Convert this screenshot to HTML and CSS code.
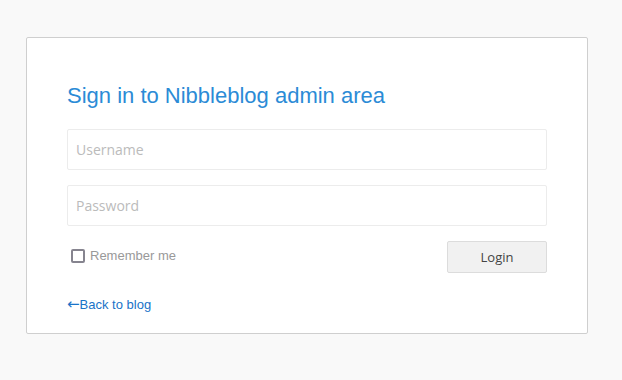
FILE: index.html
```html
<!DOCTYPE html>
<html lang="en">
<head>
    <meta charset="UTF-8">
    <title>Nibbleblog - Sign in</title>
    <link rel="stylesheet" href="styles.css">
</head>
<body>
    <div class="login-box">
        <h1 class="login-title">Sign in to Nibbleblog admin area</h1>
        <form class="login-form">
            <input type="text" class="login-input" placeholder="Username">
            <input type="password" class="login-input" placeholder="Password">
            <div class="login-row">
                <label class="remember">
                    <span class="checkbox"></span>
                    Remember me
                </label>
                <button type="button" class="login-button">Login</button>
            </div>
        </form>
        <a href="#" class="back-link"><span class="arrow">&larr;</span>Back to blog</a>
    </div>
</body>
</html>
```

FILE: styles.css
```css
* {
    margin: 0;
    padding: 0;
    box-sizing: border-box;
}

body {
    background-color: #f9f9f9;
    font-family: "Liberation Sans", Arial, sans-serif;
    padding: 37px 34px 0 26px;
}

.login-box {
    width: 562px;
    height: 297px;
    background-color: #fff;
    border: 1px solid #cfcfcf;
    border-radius: 2px;
    padding: 44px 40px 0 40px;
}

.login-title {
    font-size: 22px;
    font-weight: normal;
    color: #2b8bd6;
    line-height: 28px;
    margin-bottom: 19px;
}

.login-form {
    display: flex;
    flex-direction: column;
    gap: 15px;
}

.login-input {
    width: 480px;
    height: 41px;
    border: 1px solid #ececec;
    border-radius: 2px;
    padding: 0 8px;
    font-family: "Open Sans", sans-serif;
    font-size: 14px;
    color: #555;
    outline: none;
}

.login-input::placeholder {
    color: #bbb;
}

.login-row {
    display: flex;
    justify-content: space-between;
    align-items: flex-start;
}

.remember {
    display: flex;
    align-items: center;
    gap: 5px;
    font-size: 13px;
    color: #999;
    padding: 7px 0 0 4px;
}

.checkbox {
    width: 14px;
    height: 14px;
    border: 2px solid #86848f;
    border-radius: 2px;
    background: #fff;
}

.login-button {
    width: 100px;
    height: 32px;
    background-color: #f1f1f1;
    border: 1px solid #dcdcdc;
    border-radius: 2px;
    font-family: "Open Sans", sans-serif;
    font-size: 13px;
    color: #444;
}

.back-link {
    display: inline-block;
    margin-top: 24px;
    font-size: 13px;
    line-height: 15px;
    color: #1a73c8;
    text-decoration: none;
}

.arrow {
    font-family: "DejaVu Sans", sans-serif;
    font-size: 15px;
    line-height: 1;
}
```
